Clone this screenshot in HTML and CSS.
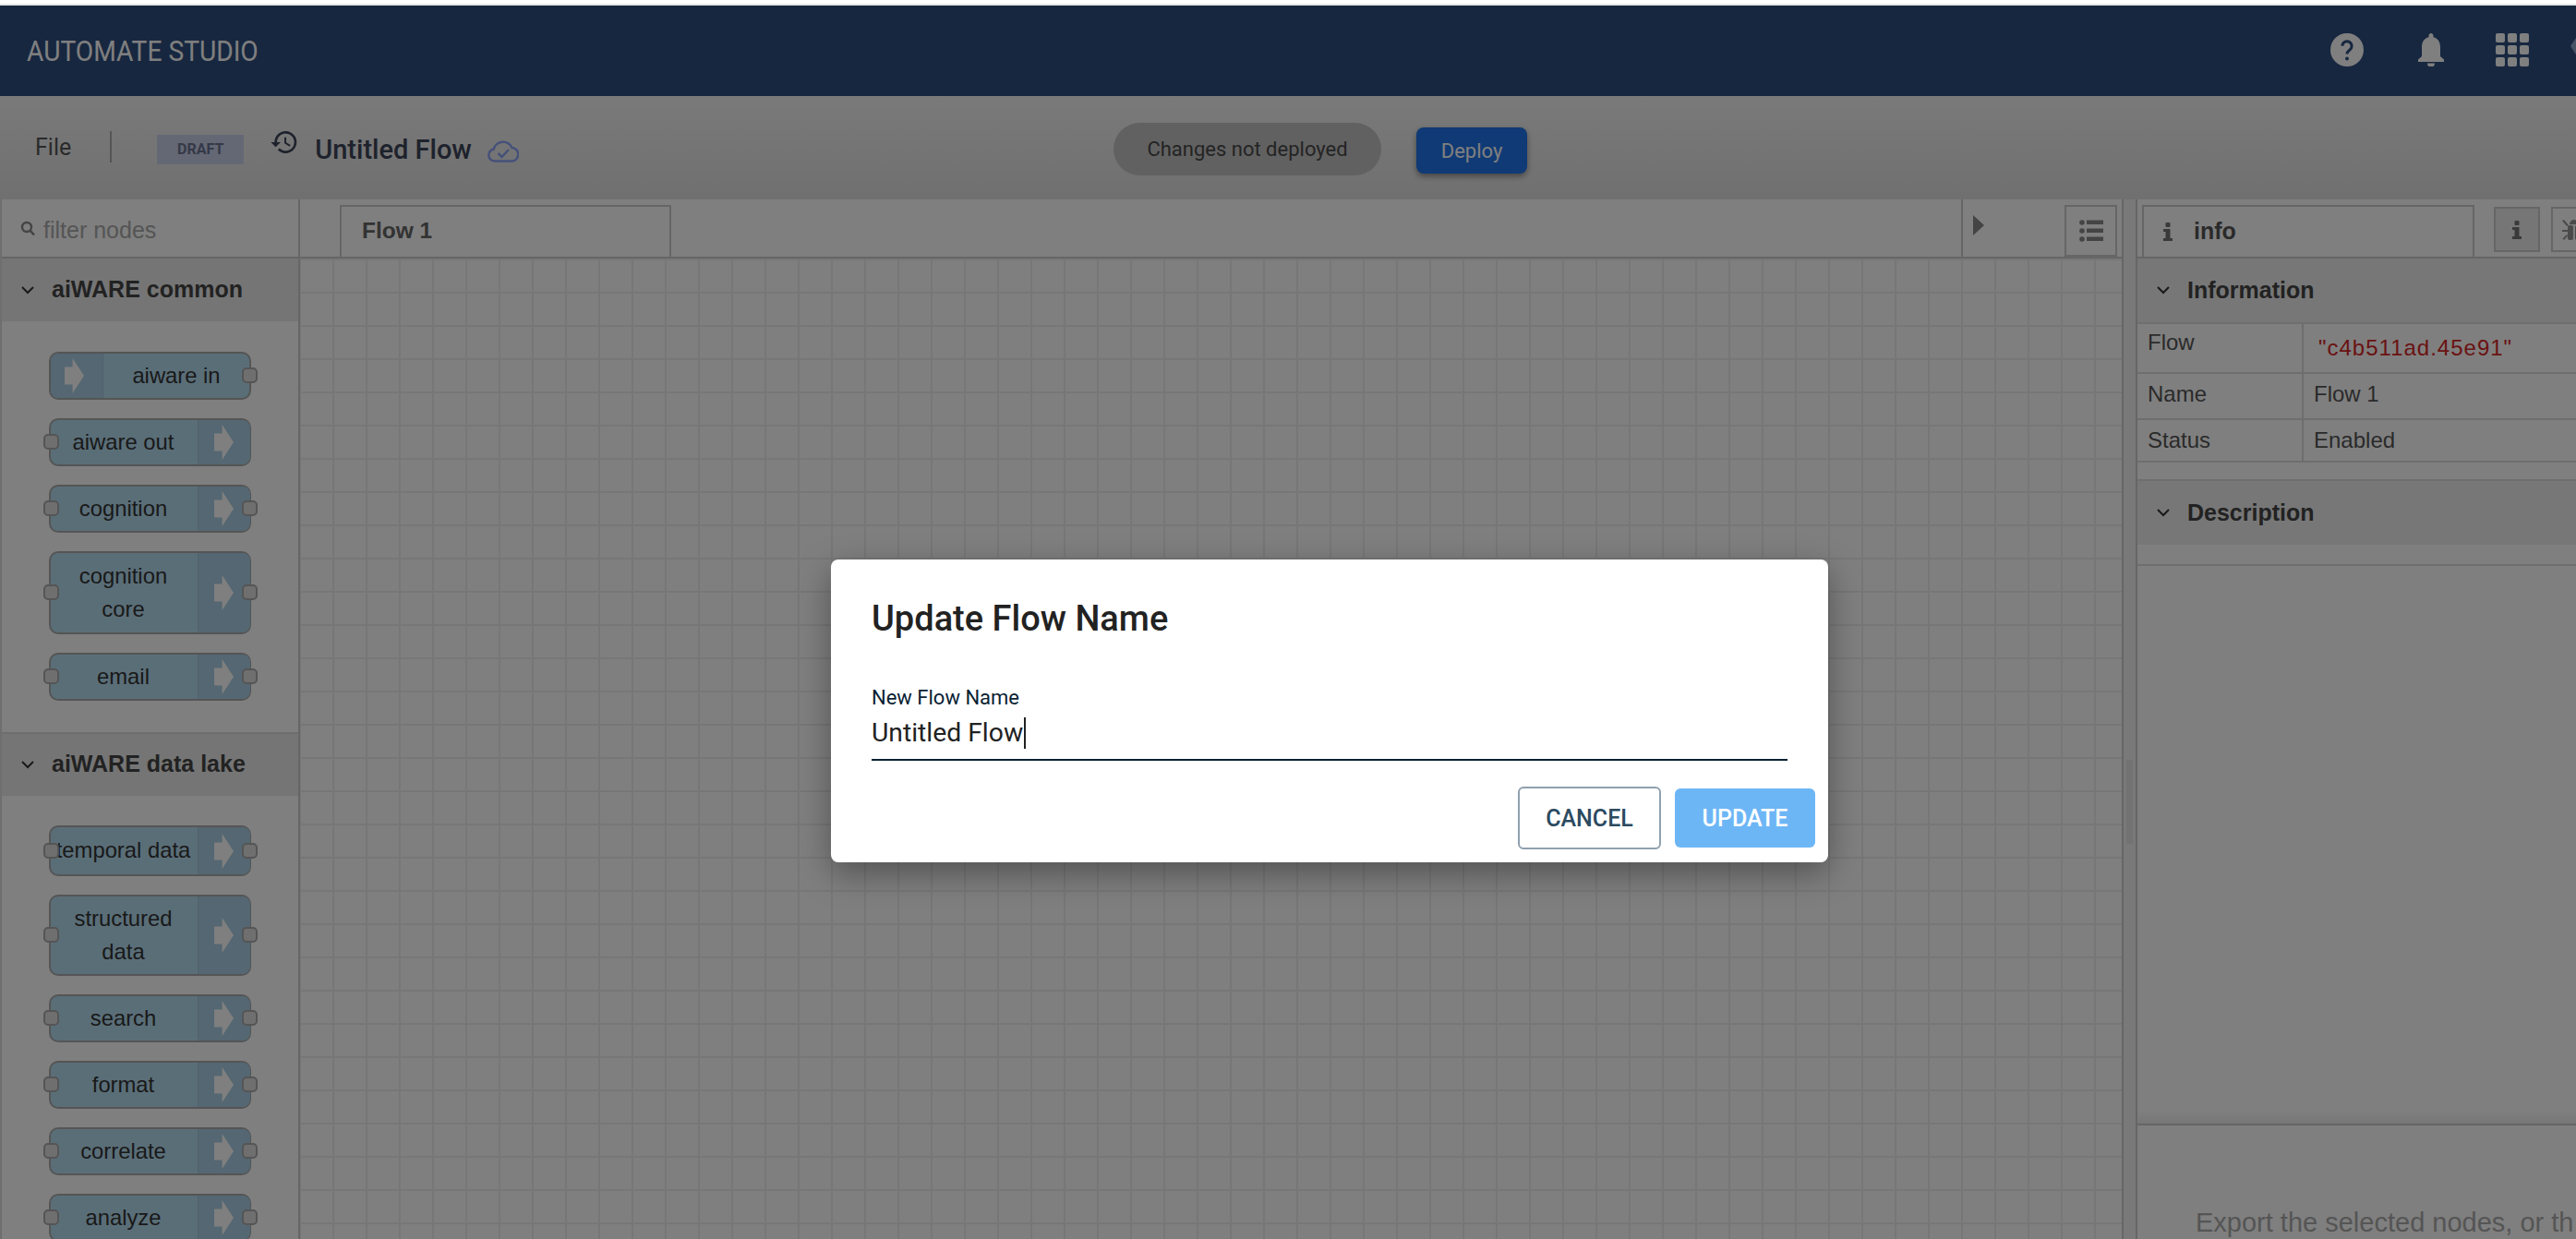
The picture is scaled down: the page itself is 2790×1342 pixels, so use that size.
FILE: index.html
```html
<!DOCTYPE html>
<html lang="en">
<head>
<meta charset="utf-8">
<title>Automate Studio</title>
<link rel="stylesheet" href="styles.css">
</head>
<body>
<div class="app">
  <header class="topbar">
    <div class="brand">AUTOMATE STUDIO</div>
    <div class="top-icons">
      <svg class="ti" viewBox="0 0 24 24"><path fill="#fff" d="M12 0a12 12 0 1 0 0 24 12 12 0 0 0 0-24z"/><path fill="none" stroke="#2e4e80" stroke-width="2" d="M8.6 9.2a3.4 3.4 0 1 1 5.4 2.8c-1.2.9-2 1.5-2 3"/><circle cx="12" cy="18.3" r="1.3" fill="#2e4e80"/></svg>
      <svg class="ti bell" viewBox="0 0 30 36"><path fill="#fff" d="M15 0c1.400 0 2.500 1.200 2.500 2.700v1.600C22.500 5.500 25 9.800 25 15v10l4 3.500V31H1v-2.500L5 25V15c0-5.200 2.500-9.500 7.500-10.700V2.700C12.500 1.200 13.600 0 15 0zM11 32.500h8a4 4 0 0 1-8 0z"/></svg>
      <svg class="ti apps" viewBox="0 0 36 36"><g fill="#fff"><rect x="0" y="0" width="10" height="10" rx="2"/><rect x="13" y="0" width="10" height="10" rx="2"/><rect x="26" y="0" width="10" height="10" rx="2"/><rect x="0" y="13" width="10" height="10" rx="2"/><rect x="13" y="13" width="10" height="10" rx="2"/><rect x="26" y="13" width="10" height="10" rx="2"/><rect x="0" y="26" width="10" height="10" rx="2"/><rect x="13" y="26" width="10" height="10" rx="2"/><rect x="26" y="26" width="10" height="10" rx="2"/></g></svg>
      <svg class="ti avatar" viewBox="0 0 36 36"><path fill="#8ca4cc" d="M8 2L0 14l8 12h28V2z"/></svg>
    </div>
  </header>
  <div class="toolbar">
    <div class="tb-left">
      <span class="file">File</span>
      <span class="tb-sep"></span>
      <span class="draft">DRAFT</span>
      <svg class="history" viewBox="0 0 24 24"><path fill="#3c4458" d="M13 3a9 9 0 0 0-9 9H1l3.900 3.900.1.100L9 12H6a7 7 0 1 1 2.050 4.950l-1.420 1.420A9 9 0 1 0 13 3zm-1 5v5l4.280 2.540.72-1.210-3.500-2.080V8H12z"/></svg>
      <span class="flow-title">Untitled Flow</span>
      <svg class="cloud" viewBox="0 0 34 24"><path fill="none" stroke="#8ca2f5" stroke-width="2.500" d="M27 22.500H8a6.500 6.500 0 0 1-1.300-12.900A10.500 10.500 0 0 1 26.500 8a7.300 7.300 0 0 1 .5 14.500z"/><path fill="none" stroke="#8ca2f5" stroke-width="2.500" d="M11.500 14l4 4 7.500-8"/></svg>
    </div>
    <div class="tb-center">
      <span class="pill">Changes not deployed</span>
      <button class="deploy">Deploy</button>
    </div>
  </div>
  <div class="main">
    <aside class="palette">
      <div class="filter">
        <svg class="search" viewBox="0 0 16 16"><circle cx="7" cy="7" r="5" fill="none" stroke="#888" stroke-width="2.400"/><path d="M10.500 10.500L15 15.500" stroke="#888" stroke-width="2.600"/></svg>
        <span class="filter-text">filter nodes</span>
      </div>
      <div class="sec-head"><svg class="chev" viewBox="0 0 14 9"><path d="M1 1l6 6 6-6" fill="none" stroke="#333" stroke-width="2"/></svg><span>aiWARE common</span></div>
      <div class="nodes nodes-a">
        <div class="node h52 in"><i class="ico"><svg viewBox="0 0 22 40"><path d="M0 10h9V0l13 20L9 40V30H0z"/></svg></i><span class="lbl">aiware in</span><b class="port r"></b></div>
        <div class="node h52 out"><b class="port l"></b><span class="lbl">aiware out</span><i class="ico"><svg viewBox="0 0 22 40"><path d="M0 10h9V0l13 20L9 40V30H0z"/></svg></i></div>
        <div class="node h52 out"><b class="port l"></b><span class="lbl">cognition</span><i class="ico"><svg viewBox="0 0 22 40"><path d="M0 10h9V0l13 20L9 40V30H0z"/></svg></i><b class="port r"></b></div>
        <div class="node h90 out"><b class="port l"></b><span class="lbl">cognition<br>core</span><i class="ico"><svg viewBox="0 0 22 40"><path d="M0 10h9V0l13 20L9 40V30H0z"/></svg></i><b class="port r"></b></div>
        <div class="node h52 out"><b class="port l"></b><span class="lbl">email</span><i class="ico"><svg viewBox="0 0 22 40"><path d="M0 10h9V0l13 20L9 40V30H0z"/></svg></i><b class="port r"></b></div>
      </div>
      <div class="sec-head sec-two"><svg class="chev" viewBox="0 0 14 9"><path d="M1 1l6 6 6-6" fill="none" stroke="#333" stroke-width="2"/></svg><span>aiWARE data lake</span></div>
      <div class="nodes nodes-b">
        <div class="node h55 out"><b class="port l"></b><span class="lbl">temporal data</span><i class="ico"><svg viewBox="0 0 22 40"><path d="M0 10h9V0l13 20L9 40V30H0z"/></svg></i><b class="port r"></b></div>
        <div class="node h88 out"><b class="port l"></b><span class="lbl">structured<br>data</span><i class="ico"><svg viewBox="0 0 22 40"><path d="M0 10h9V0l13 20L9 40V30H0z"/></svg></i><b class="port r"></b></div>
        <div class="node h52 out"><b class="port l"></b><span class="lbl">search</span><i class="ico"><svg viewBox="0 0 22 40"><path d="M0 10h9V0l13 20L9 40V30H0z"/></svg></i><b class="port r"></b></div>
        <div class="node h52 out"><b class="port l"></b><span class="lbl">format</span><i class="ico"><svg viewBox="0 0 22 40"><path d="M0 10h9V0l13 20L9 40V30H0z"/></svg></i><b class="port r"></b></div>
        <div class="node h52 out"><b class="port l"></b><span class="lbl">correlate</span><i class="ico"><svg viewBox="0 0 22 40"><path d="M0 10h9V0l13 20L9 40V30H0z"/></svg></i><b class="port r"></b></div>
        <div class="node h52 out"><b class="port l"></b><span class="lbl">analyze</span><i class="ico"><svg viewBox="0 0 22 40"><path d="M0 10h9V0l13 20L9 40V30H0z"/></svg></i><b class="port r"></b></div>
      </div>
    </aside>
    <section class="workspace">
      <div class="tabs">
        <div class="tab">Flow 1</div>
        <div class="tabs-right">
          <div class="scroll-btn"><svg viewBox="0 0 12 22"><path d="M0 0l12 11L0 22z" fill="#888"/></svg></div>
          <div class="list-btn"><svg viewBox="0 0 26 26"><g fill="#888"><circle cx="3" cy="4" r="2.800"/><circle cx="3" cy="13" r="2.800"/><circle cx="3" cy="22" r="2.800"/><rect x="8" y="1.500" width="18" height="4.500"/><rect x="8" y="10.500" width="18" height="4.500"/><rect x="8" y="19.500" width="18" height="4.500"/></g></svg></div>
        </div>
      </div>
      <div class="canvas"></div>
    </section>
    <div class="splitter"><span class="grip"></span></div>
    <aside class="sidebar">
      <div class="side-tabs">
        <div class="side-tab"><svg class="i-ico" viewBox="0 0 10 20"><path fill="#747474" d="M3.500 0h3a1 1 0 0 1 1 1v3a1 1 0 0 1-1 1h-3a1 1 0 0 1-1-1V1a1 1 0 0 1 1-1zM0 7h7.500v10H10v3H0v-3h2.500v-7H0z"/></svg><span>info</span></div>
        <div class="side-btn active"><svg class="i-ico" viewBox="0 0 10 20"><path fill="#747474" d="M3.500 0h3a1 1 0 0 1 1 1v3a1 1 0 0 1-1 1h-3a1 1 0 0 1-1-1V1a1 1 0 0 1 1-1zM0 7h7.500v10H10v3H0v-3h2.500v-7H0z"/></svg></div>
        <div class="side-btn bug"><svg class="bug-ico" viewBox="0 0 26 22"><g fill="#949494"><path d="M8 5a5 5 0 0 1 10 0z"/><rect x="6" y="6" width="6" height="16" rx="2"/><rect x="14" y="6" width="6" height="16" rx="2"/><path d="M0 1l2-1 5 6-2 1zM0 11h6v2H0zM5 16l1 1.500-4 4.500-1.500-1.500z"/></g></svg></div>
      </div>
      <div class="side-head h1st"><svg class="chev" viewBox="0 0 14 9"><path d="M1 1l6 6 6-6" fill="none" stroke="#333" stroke-width="2"/></svg><span>Information</span></div>
      <div class="row r1"><div class="k">Flow</div><div class="v id">"c4b511ad.45e91"</div></div>
      <div class="row r2"><div class="k">Name</div><div class="v">Flow 1</div></div>
      <div class="row r3"><div class="k">Status</div><div class="v">Enabled</div></div>
      <div class="side-gap"></div>
      <div class="side-head h2nd"><svg class="chev" viewBox="0 0 14 9"><path d="M1 1l6 6 6-6" fill="none" stroke="#333" stroke-width="2"/></svg><span>Description</span></div>
      <div class="side-gap2"></div>
      <div class="side-fill"></div>
      <div class="tip">Export the selected nodes, or th</div>
    </aside>
  </div>
  <div class="overlay">
    <div class="dialog">
      <h2 class="d-title">Update Flow Name</h2>
      <label class="d-label">New Flow Name</label>
      <div class="d-input"><span>Untitled Flow</span><i class="caret"></i></div>
      <div class="d-actions">
        <button class="btn-cancel">CANCEL</button>
        <button class="btn-update">UPDATE</button>
      </div>
    </div>
  </div>
</div>
</body>
</html>
```
FILE: styles.css
```css
* { box-sizing: border-box; }
html, body { margin: 0; height: 100%; overflow: hidden; background: #fff; }
body { padding-top: 6px; background: linear-gradient(#fff 4px, #e6e6e6 4px); }
.app { position: relative; width: 2880px; height: 1336px; overflow: hidden; font-family: "Liberation Sans", Arial, sans-serif; background: #fff; }

.topbar { height: 98px; background: #2e4e80; display: flex; align-items: flex-start; }
.brand { margin: 26px 0 0 29px; font: 400 32px/46px Roboto, sans-serif; color: #fff; transform: scaleX(.88); transform-origin: left center; white-space: nowrap; }
.top-icons { position: absolute; left: 2524px; top: 30px; display: flex; }
.ti { width: 36px; height: 36px; display: block; flex: none; }
.bell { width: 30px; margin-left: 58px; }
.apps { margin-left: 55px; }
.avatar { margin-left: 45px; }

.toolbar { height: 112px; background: linear-gradient(#f4f4f4, #e0e0e0); display: flex; align-items: center; position: relative; }
.tb-left { display: flex; align-items: flex-start; height: 112px; }
.file { margin: 39px 0 0 38px; font: 400 25px/34px Roboto, sans-serif; color: #555; }
.tb-sep { width: 2px; height: 34px; margin: 38px 0 0 42px; background: #aaa; }
.draft { width: 94px; height: 32px; margin: 42px 0 0 49px; background: #c8d0e8; color: #6a7290; font: 700 16px/32px Roboto, sans-serif; text-align: center; }
.history { width: 32px; height: 32px; margin: 34px 0 0 28px; flex: none; }
.flow-title { margin: 38px 0 0 17px; font: 500 29px/40px Roboto, sans-serif; color: #3c4458; white-space: nowrap; }
.cloud { width: 34px; height: 24px; margin: 48px 0 0 17px; }
.tb-center { position: absolute; left: 1206px; top: 0; height: 112px; display: flex; align-items: flex-start; }
.pill { width: 290px; height: 57px; margin-top: 29px; border-radius: 29px; background: #c2c2c2; color: #484848; font: 400 22px/57px Roboto, sans-serif; text-align: center; }
.deploy { width: 120px; height: 50px; margin: 34px 0 0 38px; border: 0; border-radius: 8px; background: #1e74ea; color: #fff; font: 400 22px Roboto, sans-serif; box-shadow: 0 3px 6px rgba(0,0,0,.4); }

.main { display: flex; height: 1126px; }

.palette { width: 325px; flex: none; border-left: 2px solid #ddd; border-right: 2px solid #ccc; background: #fff; }
.filter { height: 64px; border-bottom: 2px solid #ccc; display: flex; align-items: center; }
.search { width: 16px; height: 16px; margin-left: 20px; }
.filter-text { margin-left: 9px; font-size: 25px; line-height: 32px; padding-top: 3px; color: #aaa; }
.sec-head { height: 68px; background: #ebebeb; display: flex; align-items: center; color: #444; font-weight: 700; font-size: 25px; }
.sec-head span { margin-left: 19px; padding-bottom: 2px; }
.chev { width: 14px; height: 9px; margin-left: 21px; flex: none; }
.sec-two { border-top: 2px solid #ddd; height: 69px; }
.nodes { display: flex; flex-direction: column; gap: 20px; padding-left: 51px; }
.nodes-a { padding-top: 33px; padding-bottom: 34px; }
.nodes-b { padding-top: 32px; }

.node { position: relative; width: 219px; background: #b4dcf0; border: 2px solid #aaa; border-radius: 10px; display: flex; align-items: center; color: #333; font-size: 23.800px; line-height: 36px; flex: none; }
.h52 { height: 52px; }
.h55 { height: 55px; }
.h88 { height: 88px; }
.h90 { height: 90px; }
.lbl { text-align: center; white-space: nowrap; flex: 1; padding-bottom: 1px; }
.ico { display: flex; align-items: center; width: 57px; align-self: stretch; background: #a8cfe4; flex: none; fill: #fff; }
.ico svg { width: 21px; height: 40px; display: block; }
.out .lbl { width: 157px; flex: none; margin-right: 2px; }
.out .ico { padding-left: 17px; border-left: 1px solid #a0c4d8; border-radius: 0 8px 8px 0; }
.in .ico { padding-left: 15px; border-right: 1px solid #a0c4d8; border-radius: 8px 0 0 8px; }
.port { position: absolute; top: 50%; width: 17px; height: 17px; margin-top: -9px; background: #dedede; border: 2px solid #aaa; border-radius: 5px; }
.port.l { left: -8px; }
.port.r { right: -9px; }

.workspace { flex: none; width: 1973px; display: flex; flex-direction: column; }
.tabs { height: 64px; border-bottom: 2px solid #ccc; position: relative; padding: 6px 0 0 43px; background: #fff; }
.tab { width: 359px; height: 56px; border: 2px solid #ccc; border-bottom: 0; font-weight: 700; font-size: 24.500px; color: #666; padding: 0 0 0 22px; line-height: 52px; background: #fff; }
.tabs-right { position: absolute; left: 1799px; top: 0; height: 62px; display: flex; }
.scroll-btn { width: 112px; border-left: 2px solid #ccc; padding: 17px 0 0 11px; }
.scroll-btn svg { width: 12px; height: 22px; display: block; }
.list-btn { width: 57px; height: 56px; margin-top: 6px; border: 2px solid #ccc; display: flex; align-items: center; justify-content: center; }
.list-btn svg { width: 26px; height: 26px; }
.canvas { flex: 1; background-color: #fff; background-image: linear-gradient(#eee 2px, transparent 2px), linear-gradient(90deg, #eee 2px, transparent 2px); background-size: 36px 36px; background-position: 0 0, 35px 0; }

.splitter { width: 17px; flex: none; background: #f3f3f3; border-left: 2px solid #ccc; border-right: 2px solid #ccc; display: flex; justify-content: center; padding-top: 607px; }
.grip { width: 7px; height: 91px; background: #e4e4e4; }

.sidebar { flex: 1; display: flex; flex-direction: column; background: #fff; color: #444; }
.side-tabs { height: 64px; border-bottom: 2px solid #ccc; position: relative; padding: 6px 0 0 5px; display: flex; }
.side-tab { width: 360px; height: 56px; border: 2px solid #ccc; border-bottom: 0; display: flex; align-items: center; font-weight: 700; font-size: 25px; color: #555; padding: 0 0 0 21px; }
.side-tab span { margin-left: 23px; padding-bottom: 2px; }
.i-ico { width: 10px; height: 20px; flex: none; }
.side-btn { width: 50px; height: 49px; margin: 2px 0 0 21px; border: 2px solid #ccc; display: flex; align-items: center; justify-content: center; flex: none; }
.side-btn.active { background: #ececec; }
.side-btn.bug { margin-left: 12px; }
.bug-ico { width: 26px; height: 22px; }
.side-head { display: flex; align-items: center; background: #eee; font-weight: 700; font-size: 25px; color: #444; }
.side-head span { margin-left: 19px; padding-bottom: 1px; }
.h1st { height: 69px; }
.h2nd { height: 69px; }
.row { display: flex; border-top: 2px solid #ddd; font-size: 24px; color: #555; }
.r1 { height: 54px; }
.r2 { height: 50px; }
.r3 { height: 48px; border-bottom: 2px solid #ddd; }
.k { width: 180px; border-right: 2px solid #ddd; padding: 4px 0 0 11px; line-height: 36px; }
.r1 .k { padding-top: 2px; }
.v { padding: 4px 0 0 11px; line-height: 36px; }
.id { color: #d42626; padding: 8px 0 0 16px; letter-spacing: 1px; }
.side-gap { height: 20px; border-bottom: 2px solid #ddd; }
.side-gap2 { height: 23px; border-bottom: 2px solid #ddd; }
.side-fill { height: 606px; border-bottom: 2px solid #ccc; background: linear-gradient(transparent 590px, #eee); }
.tip { margin: 90px 0 0 63px; font-size: 29px; line-height: 30px; color: #aaa; white-space: nowrap; }

.overlay { position: absolute; inset: 0; background: rgba(0,0,0,.5); display: flex; justify-content: center; align-items: flex-start; padding-top: 600px; }
.dialog { width: 1080px; height: 328px; background: #fff; border-radius: 8px; box-shadow: 0 12px 36px rgba(0,0,0,.35); padding: 0 44px; position: relative; font-family: Roboto, sans-serif; }
.d-title { margin: 0; padding-top: 39px; font: 500 38px/50px Roboto, sans-serif; color: #222; }
.d-label { display: block; margin-top: 47px; font: 400 22px/28px Roboto, sans-serif; color: #0a2233; }
.d-input { width: 992px; height: 54px; border-bottom: 2px solid #0a2233; display: flex; align-items: flex-start; padding-top: 7px; font: 400 28.300px/34px Roboto, sans-serif; color: #222; }
.caret { width: 2px; height: 34px; background: #222; margin-left: 1px; }
.d-actions { position: absolute; right: 14px; top: 246px; display: flex; align-items: center; gap: 15px; }
.btn-cancel { width: 155px; height: 68px; background: #fff; border: 2px solid #8fa0ae; border-radius: 6px; color: #2b4a60; font: 500 25px Roboto, sans-serif; }
.btn-update { width: 152px; height: 64px; background: #6db6f6; border: 0; border-radius: 6px; color: #fff; font: 500 25px Roboto, sans-serif; }
```
